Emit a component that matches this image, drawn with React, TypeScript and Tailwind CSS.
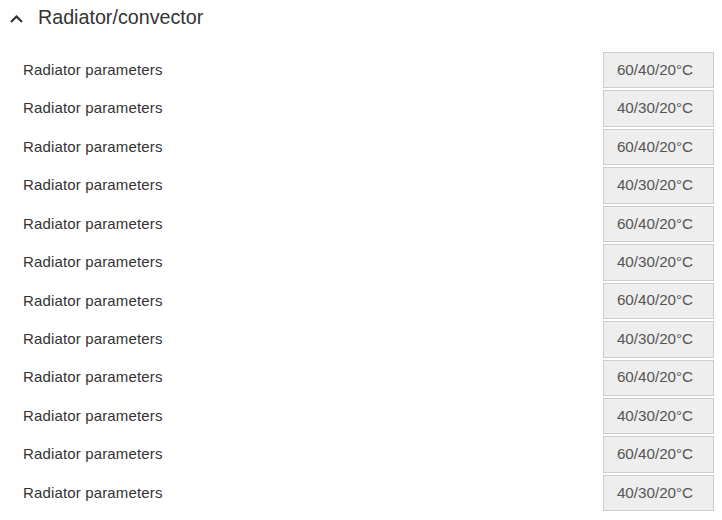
import React from 'react';

const rows = Array.from({ length: 12 }, (_, i) => (i % 2 === 0 ? '60/40/20°C' : '40/30/20°C'));

export default function App() {
  return (
    <div className="w-[722px] h-[520px] bg-white font-['Liberation_Sans',Arial,sans-serif] overflow-hidden">
      <div className="flex items-center h-[36px] pl-[10px]">
        <svg width="13" height="8" viewBox="0 0 13 8" className="mt-[1px]">
          <path d="M1 7 L6.5 1.5 L12 7" fill="none" stroke="#333" strokeWidth="2.2" />
        </svg>
        <span className="ml-[15px] text-[19.7px] text-[#333]">Radiator/convector</span>
      </div>
      <div className="flex flex-col gap-[2px] pt-[16px] pl-[23px] pr-[8px]">
        {rows.map((v, i) => (
          <div key={i} className="flex items-center justify-between">
            <span className="text-[15px] text-[#333] tracking-[0.15px]">Radiator parameters</span>
            <div className="w-[111px] h-[36.45px] flex items-center justify-center pr-[7px] bg-[#eeeeee] border border-[#cccccc] text-[15.2px] text-[#555]">
              {v}
            </div>
          </div>
        ))}
      </div>
    </div>
  );
}
